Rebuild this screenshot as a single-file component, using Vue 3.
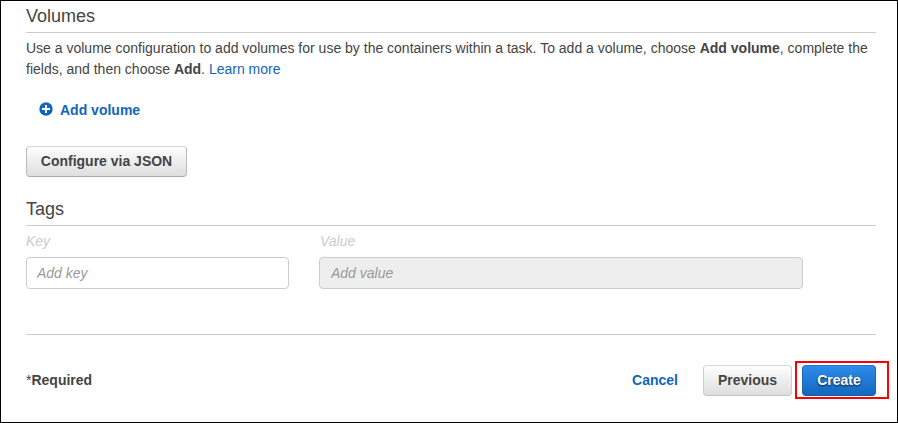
<script setup>
import { ref } from 'vue'

const key = ref('')
const value = ref('')
</script>

<template>
  <main class="page">
    <section>
      <h2 class="heading volumes">Volumes</h2>
      <p class="intro">
        Use a volume configuration to add volumes for use by the containers within a task. To add a volume, choose <b>Add volume</b>, complete the<br />
        fields, and then choose <b>Add</b>. <a class="link">Learn more</a>
      </p>
      <a class="add">
        <svg class="plus" viewBox="0 0 14 14" aria-hidden="true">
          <circle cx="7" cy="7" r="6.7" class="disc" />
          <path d="M7 3v8M3 7h8" stroke="#fff" stroke-width="2" />
        </svg>
        <span>Add volume</span>
      </a>
      <button class="btn configure">Configure via JSON</button>
    </section>

    <section>
      <h2 class="heading tags">Tags</h2>
      <div class="fields">
        <label class="field key">
          <span class="label">Key</span>
          <input v-model="key" class="input" placeholder="Add key" />
        </label>
        <label class="field value">
          <span class="label">Value</span>
          <input v-model="value" class="input" placeholder="Add value" disabled />
        </label>
      </div>
    </section>

    <footer class="footer">
      <div class="required"><span class="star">*</span>Required</div>
      <a class="cancel">Cancel</a>
      <button class="btn previous">Previous</button>
      <div class="create-wrap">
        <button class="btn primary">Create</button>
        <span class="highlight"></span>
      </div>
    </footer>
  </main>
</template>

<style>
body {
  background: #fff;
}
</style>

<style scoped>
* {
  box-sizing: border-box;
}
.page {
  width: 898px;
  height: 423px;
  padding: 0 21px 0 25px;
  border: 1px solid #000;
  overflow: hidden;
  background: #fff;
  color: #444;
  font: 14px/21px "Liberation Sans", Arial, sans-serif;
}
.heading {
  margin: 0;
  height: 32px;
  border-bottom: 1px solid #ccc;
  font-size: 18px;
  font-weight: 400;
  line-height: 30px;
}
.intro {
  margin: 5px 0 0;
  white-space: nowrap;
}
.link {
  color: #1166bb;
}
.add {
  display: flex;
  align-items: center;
  width: max-content;
  margin: 20px 0 0 13px;
  gap: 7px;
  color: #1166bb;
  font-weight: 700;
}
.plus {
  width: 14px;
  height: 14px;
  margin-top: -3px;
}
.disc {
  fill: #1166bb;
}
.btn {
  display: block;
  height: 31px;
  padding: 0 0 1px;
  border: 1px solid;
  border-color: #d4d4d4 #bbb #aaa;
  border-radius: 4px;
  background: linear-gradient(#fff, #ddd) border-box;
  color: #444;
  font: 700 14px/28px "Liberation Sans", Arial, sans-serif;
}
.configure {
  width: 161px;
  margin-top: 25px;
}
.tags {
  height: 33px;
  margin-top: 16px;
  line-height: 32px;
}
.fields {
  display: flex;
  gap: 30px;
  margin-top: 5px;
}
.key {
  width: 263px;
}
.value {
  width: 484px;
}
.label {
  display: block;
  height: 26px;
  color: #ccc;
  font-style: italic;
}
.value .label {
  padding-left: 1px;
}
.input {
  display: block;
  width: 100%;
  height: 32px;
  margin: 0;
  padding: 0 10px;
  border: 1px solid #ccc;
  border-radius: 4px;
  background: #fff;
  font: italic 14px "Liberation Sans", Arial, sans-serif;
}
.value .input {
  padding-left: 11px;
}
.input::placeholder {
  color: #999;
  opacity: 1;
}
.input:disabled {
  background: #eee;
}
.footer {
  display: flex;
  align-items: center;
  height: 77px;
  margin-top: 45px;
  padding-top: 15px;
  border-top: 1px solid #ccc;
  font-weight: 700;
}
.required {
  margin-right: auto;
}
.star {
  font-weight: 400;
}
.cancel {
  margin-right: 25px;
  color: #1166bb;
}
.previous {
  width: 89px;
  border-color: #d8d8d8 #ccc #c4c4c4;
}
.create-wrap {
  position: relative;
  margin-left: 10px;
}
.primary {
  width: 74px;
  border-color: #2478cc #1c68b8 #1a5ca6;
  background: linear-gradient(#2e8ded, #1166bb) border-box;
  color: #fff;
  text-shadow: 0 1px 2px rgba(0, 0, 0, 0.75);
}
.highlight {
  position: absolute;
  top: -4px;
  left: -7px;
  width: 94px;
  height: 38px;
  border: 2px solid #f00;
  pointer-events: none;
}
</style>
